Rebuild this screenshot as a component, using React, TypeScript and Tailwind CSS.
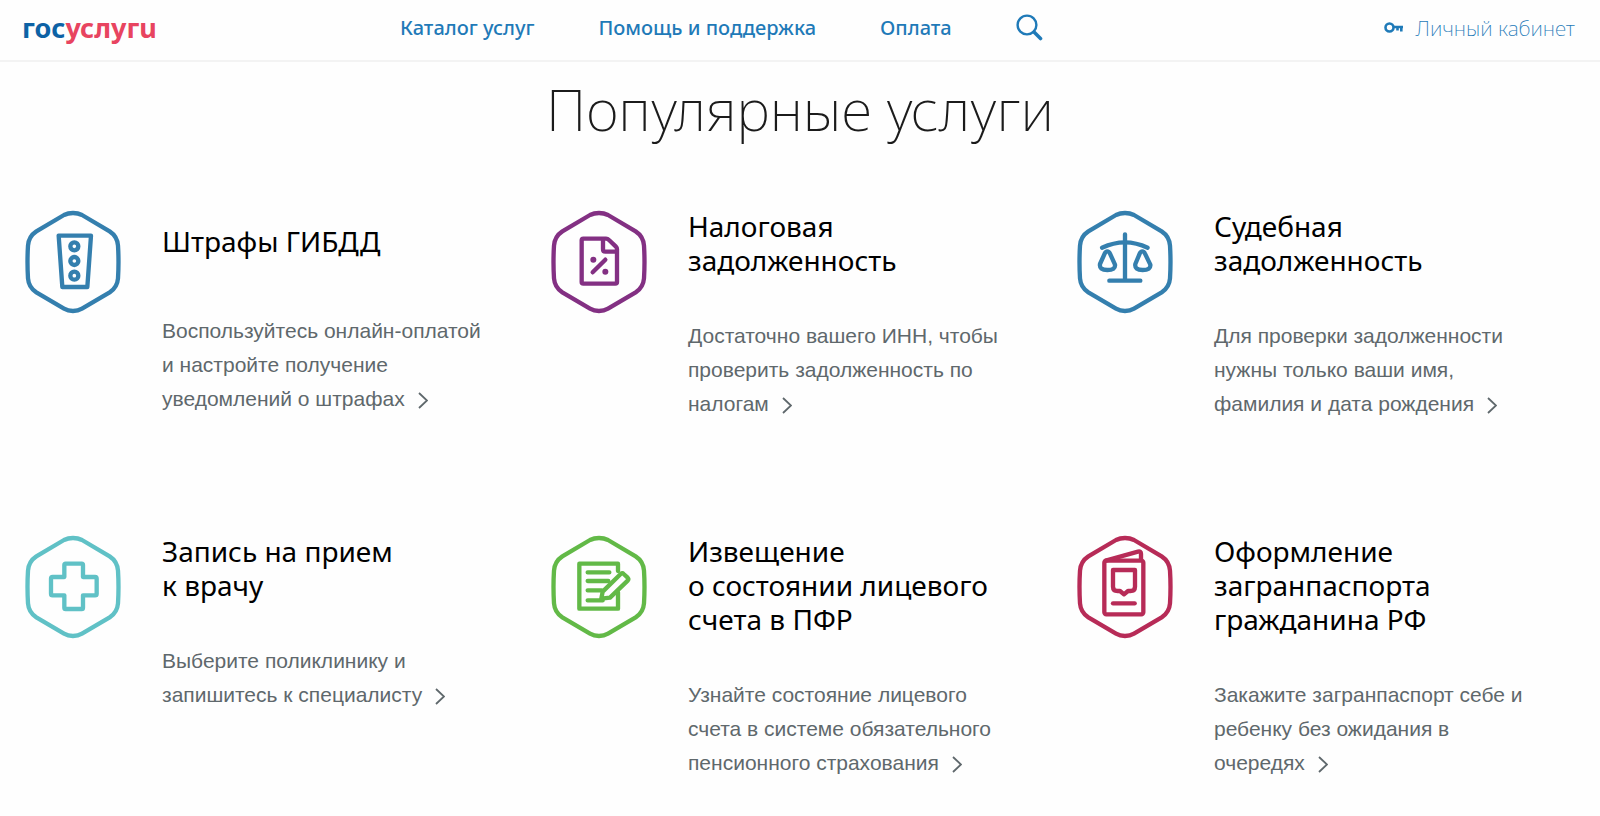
import type { ReactNode } from "react";

type Service = {
  id: string;
  title: string;
  text: string;
  color: string;
  icon: ReactNode;
};

const nav = ["Каталог услуг", "Помощь и поддержка", "Оплата"];

const services: Service[] = [
  {
    id: "fines",
    title: "Штрафы ГИБДД",
    text: "Воспользуйтесь онлайн-оплатой\nи настройте получение\nуведомлений о штрафах",
    color: "text-[#347fae]",
    icon: (
      <>
        <path d="M101 77H198L187 231H112Z" />
        <circle cx="148" cy="109" r="12" />
        <circle cx="148" cy="153" r="12" />
        <circle cx="148" cy="197" r="12" />
      </>
    ),
  },
  {
    id: "taxes",
    title: "Налоговая\nзадолженность",
    text: "Достаточно вашего ИНН, чтобы\nпроверить задолженность по\nналогам",
    color: "text-[#833083]",
    icon: (
      <>
        <path d="M97 86H165Q170 86 174 90L194 109Q198 113 198 118V216Q198 221 193 221H97Q92 221 92 216V91Q92 86 97 86Z" />
        <path d="M156 88V118Q156 125 163 125H197" />
        <path d="M163 149L125 187" />
        <circle cx="127" cy="149" r="9" fill="currentColor" stroke="none" />
        <circle cx="163" cy="185" r="9" fill="currentColor" stroke="none" />
      </>
    ),
  },
  {
    id: "court",
    title: "Судебная\nзадолженность",
    text: "Для проверки задолженности\nнужны только ваши имя,\nфамилия и дата рождения",
    color: "text-[#347fae]",
    icon: (
      <>
        <path d="M144 73V212M97 212H190" />
        <path d="M75 113Q144 81 212 113" />
        <path d="M91 124Q86 124 83 131L69 162Q66 180 91 180Q116 180 114 164L99 131Q96 124 91 124Z" />
        <path d="M196 124Q191 124 188 131L175 162Q172 180 197 180Q222 180 220 164L204 131Q201 124 196 124Z" />
      </>
    ),
  },
  {
    id: "doctor",
    title: "Запись на прием\nк врачу",
    text: "Выберите поликлинику и\nзапишитесь к специалисту",
    color: "text-[#60c1c6]",
    icon: (
      <path d="M122 86H170Q174 86 174 90V126H210Q215 126 215 131V176Q215 181 210 181H174V218Q174 222 170 222H122Q118 222 118 218V181H83Q78 181 78 176V131Q78 126 83 126H118V90Q118 86 122 86Z" />
    ),
  },
  {
    id: "pension",
    title: "Извещение\nо состоянии лицевого\nсчета в ПФР",
    text: "Узнайте состояние лицевого\nсчета в системе обязательного\nпенсионного страхования",
    color: "text-[#62b947]",
    icon: (
      <>
        <path d="M201 108V86H85V221H201V172" />
        <path d="M110 112H175M110 138H172M110 166H152M110 196H155" />
        <path d="M151 191L155 170L209 117Q214 113 218 117L230 128Q234 132 230 137L177 188Z" />
      </>
    ),
  },
  {
    id: "passport",
    title: "Оформление\nзагранпаспорта\nгражданина РФ",
    text: "Закажите загранпаспорт себе и\nребенку без ожидания в\nочередях",
    color: "text-[#b72b57]",
    icon: (
      <>
        <rect x="82" y="77" width="117" height="161" rx="6" />
        <path d="M86 77L183 50Q192 48 192 56V75" />
        <path d="M108 105H174V155Q174 168 160 168H153L141 178L129 168H122Q108 168 108 155Z" />
        <path d="M108 205H173" />
      </>
    ),
  },
];

function HexIcon({ children, color }: { children: ReactNode; color: string }) {
  return (
    <svg
      viewBox="0 0 288 312"
      className={`mt-px h-[104px] w-24 shrink-0 ${color}`}
      fill="none"
      stroke="currentColor"
      strokeWidth="13"
      strokeLinecap="round"
      strokeLinejoin="round"
      aria-hidden="true"
    >
      <path d="M144 9Q159 9 171 15L254 64Q277 79 279 107Q282 156 279 205Q277 232 254 247L171 296Q159 303 144 303Q129 303 117 296L34 247Q11 232 9 205Q6 156 9 107Q11 79 34 64L117 15Q129 9 144 9Z" />
      {children}
    </svg>
  );
}

function ServiceCard({ service }: { service: Service }) {
  return (
    <a href={`#${service.id}`} className="flex items-start">
      <HexIcon color={service.color}>{service.icon}</HexIcon>
      <div className="ml-[41px] min-w-0">
        <h2 className="flex min-h-[63px] items-center font-['Noto_Sans',sans-serif] text-[28px] leading-[34px] whitespace-pre-line text-black">
          {service.title}
        </h2>
        <p className="mt-[42px] font-['Liberation_Sans',Arial,sans-serif] text-[21px] leading-[34px] whitespace-pre-line text-[#5f686c]">
          {service.text}
          <svg
            viewBox="0 0 10 17"
            className="ml-[13px] inline-block h-[17px] w-[10px] align-[-3px]"
            fill="none"
            stroke="currentColor"
            strokeWidth="1.8"
            aria-hidden="true"
          >
            <path d="M1 1L9 8.5L1 16" />
          </svg>
        </p>
      </div>
    </a>
  );
}

export default function App() {
  return (
    <div className="min-h-screen bg-[#fefefe] font-['Noto_Sans',sans-serif]">
      <header className="flex h-[62px] items-center border-b-2 border-[#f3f3f3] pb-[5px]">
        <div className="w-1/4 pl-[22px]">
          <a href="#home" className="text-[27px] leading-8 font-bold text-[#0d62a5]">
            гос<span className="text-[#e84460]">услугu</span>
          </a>
        </div>
        <nav className="flex items-center gap-16 text-[20px] leading-7 font-medium text-[#1f7ab8]">
          {nav.map((item) => (
            <a key={item} href="#nav">
              {item}
            </a>
          ))}
          <button type="button" aria-label="Поиск">
            <svg viewBox="0 0 27 27" className="size-[27px]" fill="none" stroke="currentColor" aria-hidden="true">
              <circle cx="11" cy="11" r="9.4" strokeWidth="2.4" />
              <path d="M18 18L24.5 24.5" strokeWidth="3.6" strokeLinecap="round" />
            </svg>
          </button>
        </nav>
        <a
          href="#account"
          className="ml-auto flex items-center gap-3 pr-[25px] text-[21px] leading-7 font-extralight text-[#1f7ab8]"
        >
          <svg viewBox="0 0 19 11" className="h-[11px] w-[19px]" fill="none" stroke="currentColor" strokeWidth="2.6" aria-hidden="true">
            <circle cx="5.5" cy="5.5" r="4" />
            <path d="M9.5 5H19M13.5 5V8.5M17.3 5V9.5" />
          </svg>
          Личный кабинет
        </a>
      </header>

      <main>
        <h1 className="mt-[13px] text-center text-[57px] leading-[68px] font-extralight text-[#1b1b1b]">
          Популярные услуги
        </h1>
        <div className="mt-[66px] grid grid-cols-3 gap-x-7 gap-y-[113px] px-[25px]">
          {services.map((service) => (
            <ServiceCard key={service.id} service={service} />
          ))}
        </div>
      </main>
    </div>
  );
}
